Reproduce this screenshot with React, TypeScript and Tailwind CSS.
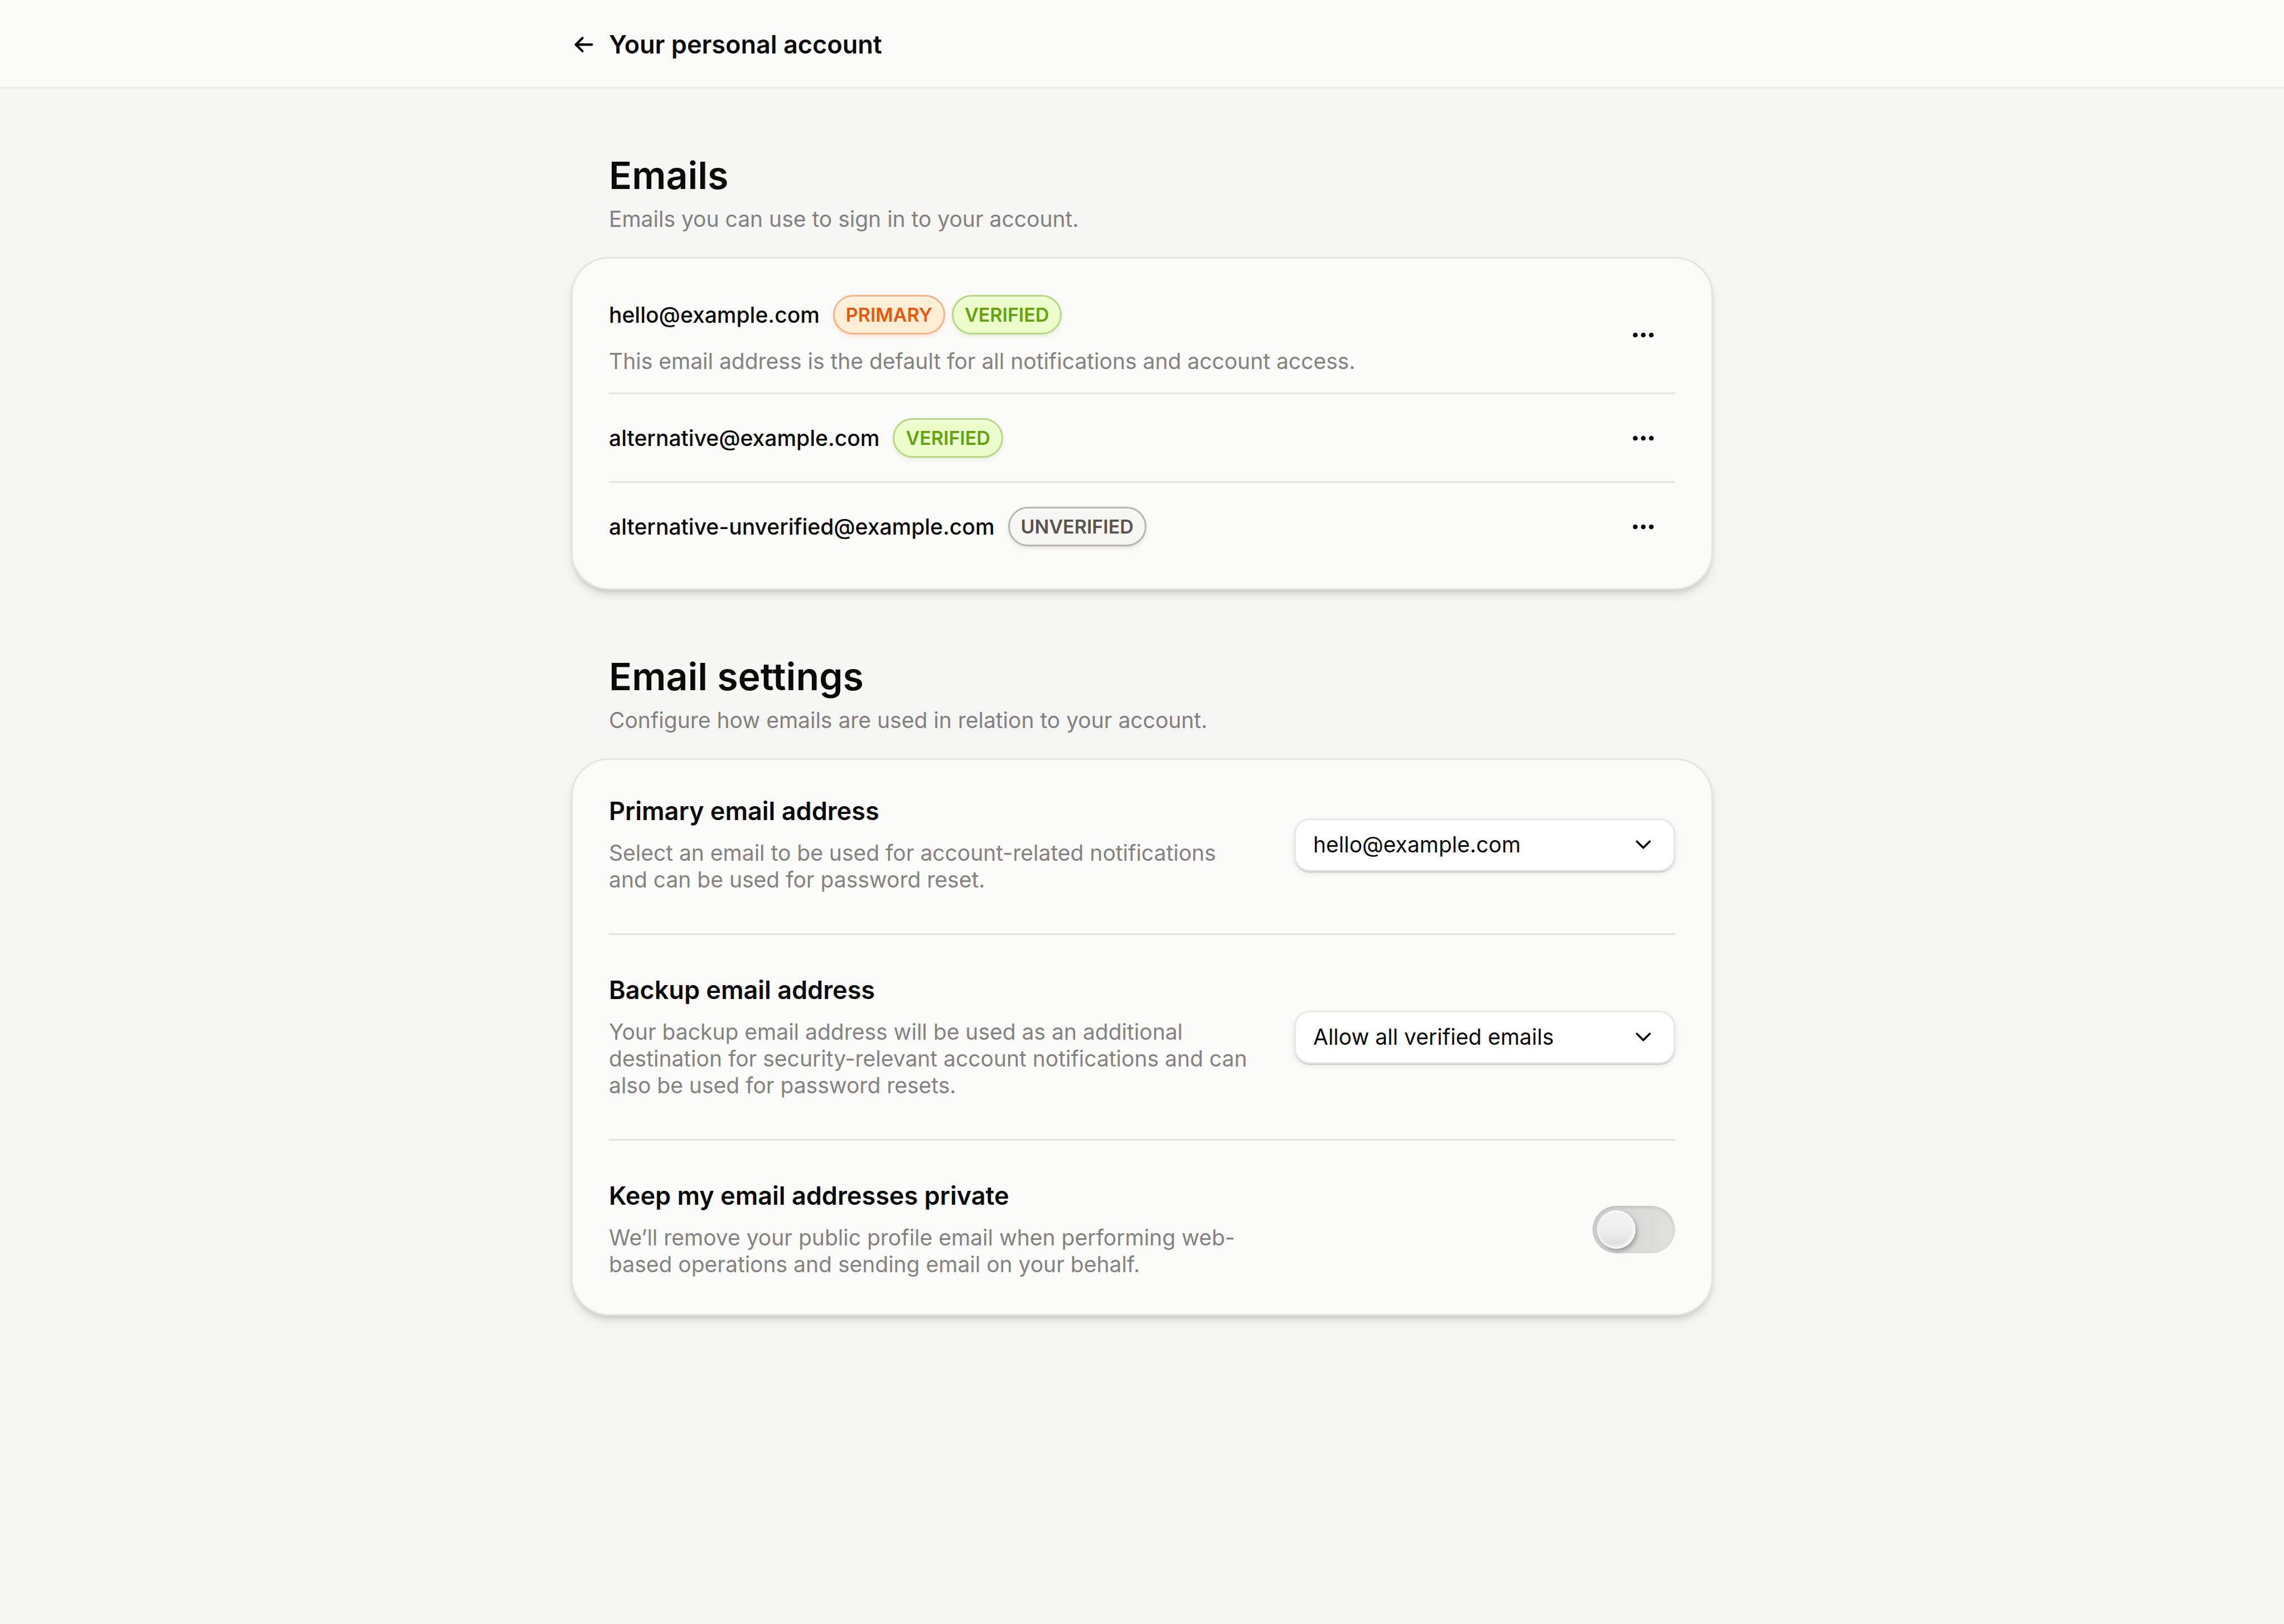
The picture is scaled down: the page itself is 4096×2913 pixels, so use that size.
import { useId, useState, type ReactNode } from "react";
import { ChevronDown } from "lucide-react";

function ArrowLeftIcon() {
  return (
    <svg
      viewBox="0 0 64 64"
      fill="none"
      stroke="currentColor"
      strokeWidth="6"
      strokeLinecap="round"
      strokeLinejoin="round"
      className="size-[46px]"
      aria-hidden="true"
    >
      <path d="M52 32H12M28.5 15.7 12.2 32l16.3 16.3" />
    </svg>
  );
}

function DotsIcon() {
  return (
    <svg viewBox="0 0 16 16" fill="currentColor" className="size-[46px]" aria-hidden="true">
      <circle cx="3" cy="8" r="1.5" />
      <circle cx="8" cy="8" r="1.5" />
      <circle cx="13" cy="8" r="1.5" />
    </svg>
  );
}

const tones = {
  orange:
    "border-[#f7b285] bg-[#ffedd5] text-[#ea580c] shadow-[inset_0_3px_4px_rgba(255,255,255,0.5),0_3px_6px_rgba(234,88,12,0.14)]",
  lime: "border-[#b6d87f] bg-[#ecfccb] text-[#65a30d] shadow-[inset_0_3px_4px_rgba(255,255,255,0.5),0_3px_6px_rgba(101,163,13,0.14)]",
  stone:
    "border-[#b6b4b2] bg-[#f5f5f4] text-[#57534e] shadow-[inset_0_3px_4px_rgba(255,255,255,0.5),0_3px_6px_rgba(87,83,78,0.14)]",
};

function Badge({ tone, children }: { tone: keyof typeof tones; children: ReactNode }) {
  return (
    <span
      className={`flex h-[71px] items-center rounded-full border-3 px-5 text-[34px] leading-none font-semibold ${tones[tone]}`}
    >
      {children}
    </span>
  );
}

function Section({ title, description, children }: { title: string; description: string; children: ReactNode }) {
  return (
    <section>
      <div className="flex flex-col gap-[14px] px-[68px]">
        <h2 className="text-[68px] leading-[82px] font-semibold">{title}</h2>
        <p className="text-[39px] leading-[48px] text-[#81807e]">{description}</p>
      </div>
      <div className="mt-11 rounded-[68px] border-3 border-[#e5e4e3] bg-[#fafaf9] px-[65px] shadow-[0_11px_17px_-3px_rgba(12,10,9,0.1),0_6px_11px_-4px_rgba(12,10,9,0.14)]">
        {children}
      </div>
    </section>
  );
}

function EmailRow({ email, note, children }: { email: string; note?: string; children: ReactNode }) {
  return (
    <li className="flex items-center justify-between border-b-3 border-[#e2e2e1] pt-[43px] pb-[42px] first:pt-0 first:pb-8 last:border-b-0 last:pb-0">
      <div className="flex flex-col gap-6">
        <div className="flex items-center gap-3">
          <span className="mr-3 text-[39px] leading-[48px] font-medium">{email}</span>
          {children}
        </div>
        {note && <p className="text-[39px] leading-[48px] text-[#838281]">{note}</p>}
      </div>
      <button type="button" aria-label={`Actions for ${email}`} className="flex px-[34px]">
        <DotsIcon />
      </button>
    </li>
  );
}

function SettingRow({
  label,
  description,
  htmlFor,
  children,
}: {
  label: string;
  description: string;
  htmlFor: string;
  children: ReactNode;
}) {
  return (
    <div className="flex items-center justify-between gap-[68px] border-b-3 border-[#e2e2e1] py-[72px] first:pt-0 last:border-b-0 last:pb-0">
      <div className="flex max-w-[1161px] flex-1 flex-col gap-6">
        <label htmlFor={htmlFor} className="text-[45px] leading-[54px] font-semibold">
          {label}
        </label>
        <p className="text-[39px] leading-[48px] text-[#838281]">{description}</p>
      </div>
      {children}
    </div>
  );
}

function SelectBox({ id, options }: { id: string; options: string[] }) {
  return (
    <div className="relative w-[683px]">
      <select
        id={id}
        className="h-[95px] w-full appearance-none rounded-[28px] border-3 border-[#e9e9e8] bg-white pr-20 pl-[31px] text-[39px] shadow-[0_2px_3px_-1px_rgba(12,10,9,0.28),0_4px_9px_rgba(12,10,9,0.08)]"
      >
        {options.map((option) => (
          <option key={option}>{option}</option>
        ))}
      </select>
      <ChevronDown className="pointer-events-none absolute inset-y-0 right-[34px] my-auto size-[46px]" strokeWidth={2} />
    </div>
  );
}

function Toggle({ id }: { id: string }) {
  const [on, setOn] = useState(false);
  return (
    <span className="relative flex h-[85px] w-[148px]">
      <input
        id={id}
        type="checkbox"
        role="switch"
        checked={on}
        onChange={(event) => setOn(event.target.checked)}
        className="peer h-full w-full appearance-none rounded-full bg-linear-to-r from-[#d1d1d0] to-[#e1e1e0] shadow-[inset_0_3px_6px_rgba(12,10,9,0.12)]"
      />
      <span className="pointer-events-none absolute inset-y-0 left-2 my-auto size-[69px] rounded-full bg-linear-to-b from-[#f3f3f3] via-[#efefef] to-[#dadada] shadow-[inset_-2px_-4px_6px_rgba(255,255,255,0.9),inset_0_2px_3px_rgba(255,255,255,0.6),3px_4px_8px_-1px_rgba(12,10,9,0.36)] peer-checked:right-2 peer-checked:left-auto" />
    </span>
  );
}

export default function App() {
  const id = useId();
  return (
    <div className="min-h-screen bg-[#f5f5f4] font-[Inter,sans-serif] text-[#0a0a08] [font-variant-ligatures:none]">
      <header className="border-b-3 border-[#ebebea] bg-[#fafaf9]">
        <div className="mx-auto flex h-[156px] w-1/2 items-center gap-[22px] pt-[3px]">
          <a href="#back" aria-label="Back">
            <ArrowLeftIcon />
          </a>
          <h1 className="text-[45px] leading-[54px] font-semibold">Your personal account</h1>
        </div>
      </header>
      <main className="mx-auto flex w-1/2 flex-col gap-[114px] pt-[114px]">
        <Section title="Emails" description="Emails you can use to sign in to your account.">
          <ul className="pt-[65px] pb-[75px]">
            <EmailRow
              email="hello@example.com"
              note="This email address is the default for all notifications and account access."
            >
              <Badge tone="orange">PRIMARY</Badge>
              <Badge tone="lime">VERIFIED</Badge>
            </EmailRow>
            <EmailRow email="alternative@example.com">
              <Badge tone="lime">VERIFIED</Badge>
            </EmailRow>
            <EmailRow email="alternative-unverified@example.com">
              <Badge tone="stone">UNVERIFIED</Badge>
            </EmailRow>
          </ul>
        </Section>
        <Section title="Email settings" description="Configure how emails are used in relation to your account.">
          <div className="py-[65px]">
            <SettingRow
              htmlFor={`${id}-primary`}
              label="Primary email address"
              description="Select an email to be used for account-related notifications and can be used for password reset."
            >
              <SelectBox id={`${id}-primary`} options={["hello@example.com", "alternative@example.com"]} />
            </SettingRow>
            <SettingRow
              htmlFor={`${id}-backup`}
              label="Backup email address"
              description="Your backup email address will be used as an additional destination for security-relevant account notifications and can also be used for password resets."
            >
              <SelectBox id={`${id}-backup`} options={["Allow all verified emails", "Only allow primary email"]} />
            </SettingRow>
            <SettingRow
              htmlFor={`${id}-private`}
              label="Keep my email addresses private"
              description="We’ll remove your public profile email when performing web-based operations and sending email on your behalf."
            >
              <Toggle id={`${id}-private`} />
            </SettingRow>
          </div>
        </Section>
      </main>
    </div>
  );
}
